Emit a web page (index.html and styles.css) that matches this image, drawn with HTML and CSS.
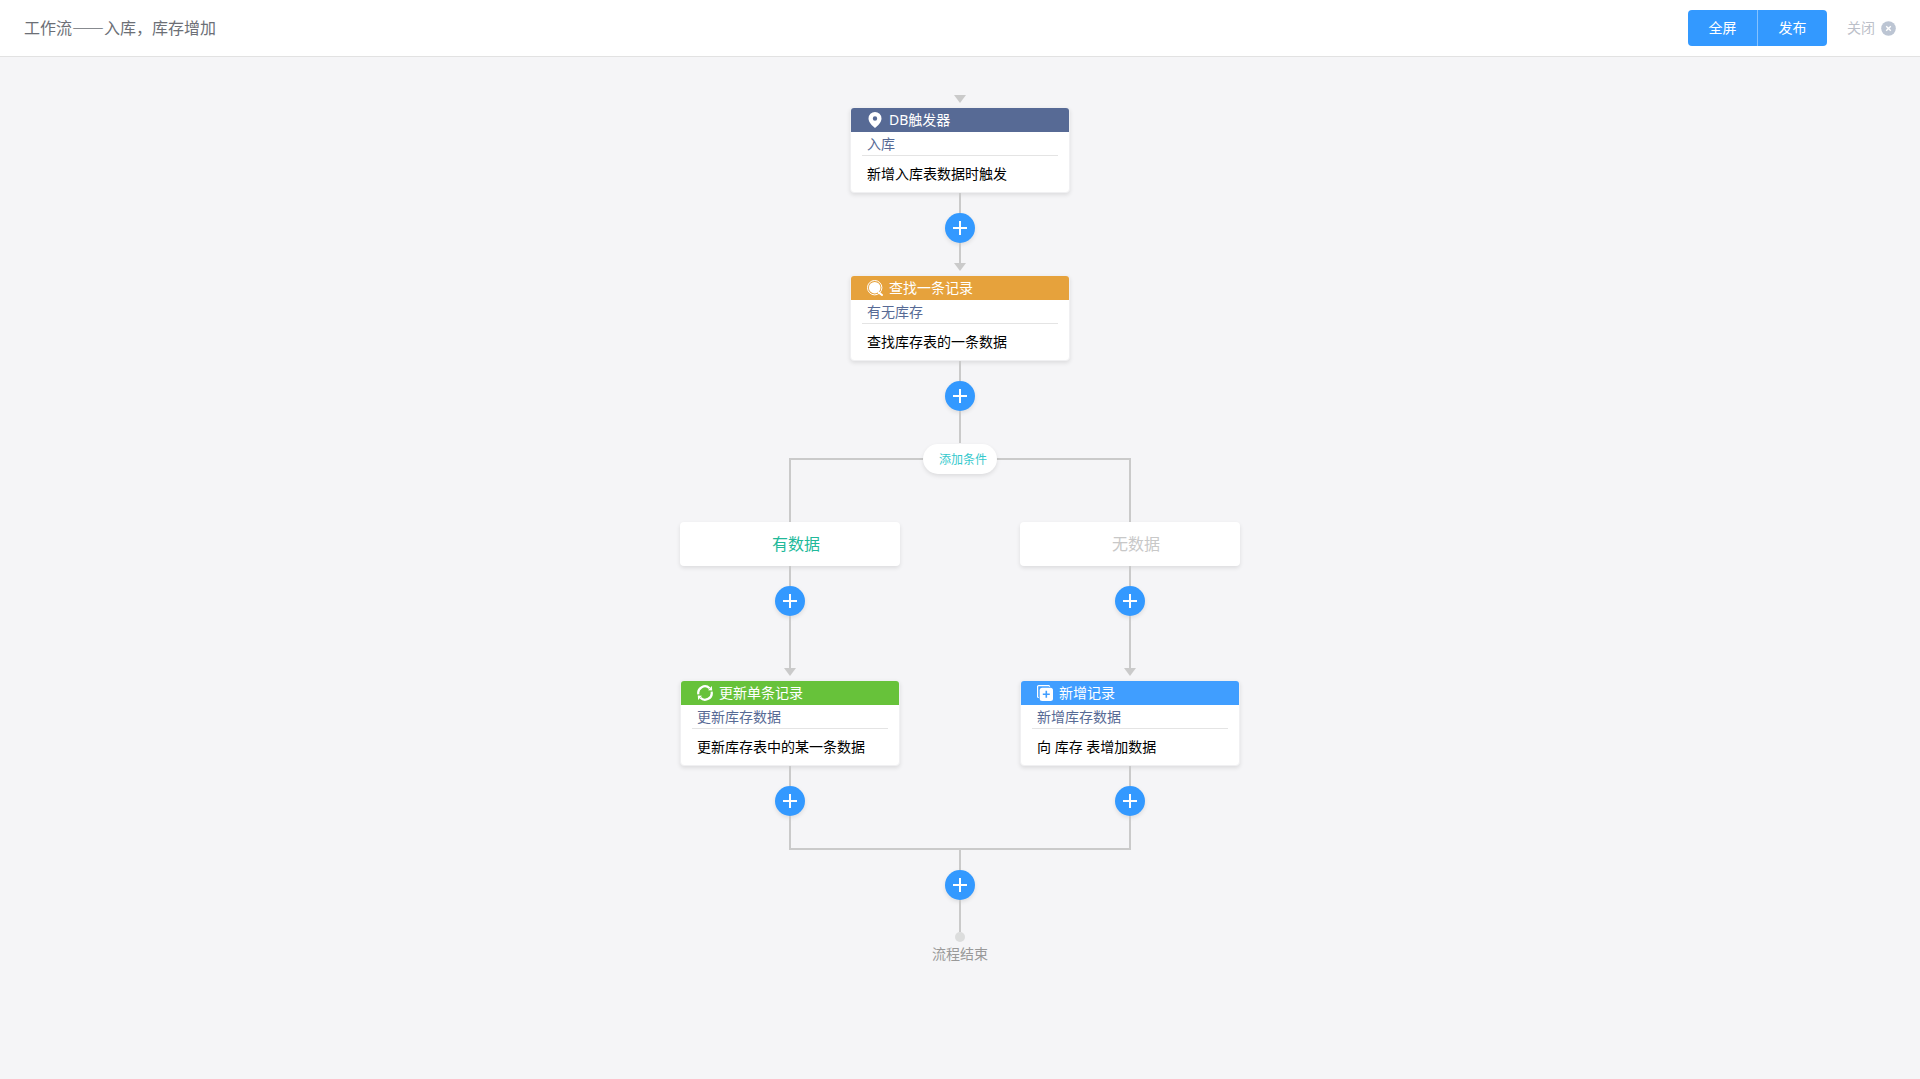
FILE: index.html
```html
<!DOCTYPE html>
<html lang="zh-CN">
<head>
    <meta charset="UTF-8">
    <meta name="viewport" content="width=device-width, initial-scale=1.0">
    <title>工作流——入库，库存增加</title>
    <link rel="stylesheet" href="styles.css">
</head>
<body>
    <header class="topbar">
        <h1>工作流——入库，库存增加</h1>
        <div class="actions">
            <div class="btn-group">
                <button type="button">全屏</button>
                <button type="button">发布</button>
            </div>
            <button type="button" class="close">
                关闭
                <svg width="15" height="15" viewBox="0 0 15 15">
                    <circle cx="7.5" cy="7.5" r="7.3" fill="#bcc5d3"/>
                    <path d="M5.2 5.2l4.6 4.6M9.8 5.2l-4.6 4.6" stroke="#fff" stroke-width="1.4"/>
                </svg>
            </button>
        </div>
    </header>

    <main class="flow">
        <i class="arrow"></i>
        <section class="card trigger">
            <h2>
                <svg width="16" height="16" viewBox="0 0 16 16">
                    <path fill="#fff" fill-rule="evenodd" d="M8 0a6.5 6.5 0 0 0-6.5 6.4C1.5 10 5 13.5 8 16c3-2.5 6.5-6 6.5-9.6A6.5 6.5 0 0 0 8 0zm0 4.3a2.2 2.2 0 1 1 0 4.4 2.2 2.2 0 0 1 0-4.4z"/>
                </svg>
                <span>DB触发器</span>
            </h2>
            <h3>入库</h3>
            <p>新增入库表数据时触发</p>
        </section>
        <i class="line"></i>
        <button type="button" class="add" aria-label="添加节点"></button>
        <i class="line"></i>

        <i class="arrow"></i>
        <section class="card search">
            <h2>
                <svg width="16" height="16" viewBox="0 0 16 16">
                    <circle cx="7.7" cy="7.7" r="7.2" fill="none" stroke="#fff"/>
                    <circle cx="7.7" cy="7.7" r="5.8" fill="#fff"/>
                    <path d="M12 12.6l3 2.4" stroke="#fff" stroke-width="2" stroke-linecap="round"/>
                </svg>
                <span>查找一条记录</span>
            </h2>
            <h3>有无库存</h3>
            <p>查找库存表的一条数据</p>
        </section>
        <i class="line"></i>
        <button type="button" class="add" aria-label="添加节点"></button>
        <i class="line line-mid"></i>

        <button type="button" class="condition">添加条件</button>
        <div class="fork"></div>
        <div class="branches">
            <div class="branch">
                <div class="case has-data">有数据</div>
                <i class="line"></i>
                <button type="button" class="add" aria-label="添加节点"></button>
                <i class="line line-long"></i>
                <i class="arrow"></i>
                <section class="card update">
                    <h2>
                        <svg width="16" height="16" viewBox="0 0 16 16">
                            <path d="M1.4 9.4A6.7 6.7 0 0 1 12.6 3.2M14.6 6.6A6.7 6.7 0 0 1 3.4 12.8" fill="none" stroke="#fff" stroke-width="2.2"/>
                            <path d="M11 5.2L15.2 5.4 14.9 1zM5 10.8L.8 10.6 1.1 15z" fill="#fff"/>
                        </svg>
                        <span>更新单条记录</span>
                    </h2>
                    <h3>更新库存数据</h3>
                    <p>更新库存表中的某一条数据</p>
                </section>
                <i class="line"></i>
                <button type="button" class="add" aria-label="添加节点"></button>
            </div>
            <div class="branch">
                <div class="case">无数据</div>
                <i class="line"></i>
                <button type="button" class="add" aria-label="添加节点"></button>
                <i class="line line-long"></i>
                <i class="arrow"></i>
                <section class="card create">
                    <h2>
                        <svg width="16" height="16" viewBox="0 0 16 16">
                            <path d="M1.8 12.5H1.6a1 1 0 0 1-1-1V1.6a1 1 0 0 1 1-1h10a1 1 0 0 1 1 1v.2" fill="none" stroke="#fff" stroke-width="1.2"/>
                            <rect x="2.7" y="2.7" width="13.3" height="13.3" rx="2.5" fill="#fff"/>
                            <path d="M9.3 5.8v7M5.8 9.3h7" stroke="#409eff" stroke-width="1.6"/>
                        </svg>
                        <span>新增记录</span>
                    </h2>
                    <h3>新增库存数据</h3>
                    <p>向 库存 表增加数据</p>
                </section>
                <i class="line"></i>
                <button type="button" class="add" aria-label="添加节点"></button>
            </div>
        </div>
        <div class="join"></div>

        <i class="line"></i>
        <button type="button" class="add" aria-label="添加节点"></button>
        <i class="line line-mid"></i>
        <i class="dot"></i>
        <p class="end">流程结束</p>
    </main>
</body>
</html>
```

FILE: styles.css
```css
* {
    margin: 0;
    padding: 0;
    box-sizing: border-box;
}

body {
    min-height: 100vh;
    background: #f5f5f7;
    color: #000;
    font-family: 'Noto Sans', 'Noto Sans CJK SC', sans-serif;
    font-size: 14px;
}

button {
    border: none;
    background: none;
    font: inherit;
    cursor: pointer;
}

.topbar {
    display: flex;
    align-items: center;
    justify-content: space-between;
    height: 57px;
    padding: 0 24px;
    background: #fff;
    border-bottom: 1px solid #e2e2e2;
}

.topbar h1 {
    padding-bottom: 2px;
    color: #6c6f76;
    font-family: 'Noto Sans CJK SC', sans-serif;
    font-size: 16px;
    font-weight: 400;
}

.actions {
    display: flex;
    align-items: center;
    gap: 20px;
}

.btn-group {
    display: flex;
    border-radius: 4px;
    overflow: hidden;
}

.btn-group button {
    width: 69px;
    height: 36px;
    padding-bottom: 2px;
    background: #3399ff;
    color: #fff;
}

.btn-group button + button {
    width: 70px;
    border-left: 1px solid #85c2ff;
}

.close {
    display: flex;
    align-items: center;
    gap: 6px;
    color: #bcc0c9;
    line-height: 20px;
}

.flow {
    display: flex;
    flex-direction: column;
    align-items: center;
    padding: 38px 0 40px;
}

/* connectors */
.line {
    width: 2px;
    height: 20px;
    background: #cacaca;
}

.line-mid {
    height: 32px;
}

.line-long {
    height: 52px;
}

.arrow {
    margin-bottom: 4px;
    border: 6px solid transparent;
    border-top: 8px solid #cacaca;
    border-bottom: none;
}

.fork, .join {
    width: 342px;
    border: 2px solid #cacaca;
}

.fork {
    height: 64px;
    margin-top: -16px;
    border-bottom: none;
}

.join {
    height: 34px;
    border-top: none;
}

.dot {
    width: 10px;
    height: 10px;
    border-radius: 50%;
    background: #dcdddd;
}

/* round plus button */
.add {
    width: 30px;
    height: 30px;
    border-radius: 50%;
    background:
        linear-gradient(#fff, #fff) center / 14px 2px no-repeat,
        linear-gradient(#fff, #fff) center / 2px 14px no-repeat,
        #3399ff;
    box-shadow: 0 2px 4px rgba(0,0,0,.1);
}

/* node cards */
.card {
    width: 220px;
    height: 86px;
    border: 1px solid #f0f0f2;
    border-radius: 4px;
    background: #fff;
    box-shadow: 0 2px 4px rgba(0,0,0,.1);
    overflow: hidden;
}

.card h2 {
    display: flex;
    align-items: center;
    gap: 6px;
    height: 24px;
    padding-left: 16px;
    color: #fff;
    font-size: 14px;
    font-weight: 400;
}

.card h2 span {
    padding-bottom: 2px;
}

.card h3 {
    height: 24px;
    margin: 0 11px;
    padding-left: 5px;
    border-bottom: 1px solid #e4e4e4;
    color: #576a95;
    font-size: 14px;
    font-weight: 400;
    line-height: 24px;
}

.card p {
    padding-left: 16px;
    line-height: 36px;
}

.trigger h2 { background: #576a95 }
.search h2 { background: #e6a23c }
.update h2 { background: #67c23a }
.create h2 { background: #409eff }

.condition {
    position: relative;
    height: 30px;
    margin-top: 1px;
    padding: 0 10px 0 16px;
    border-radius: 15px;
    background: #fff;
    color: #34c9cd;
    font-size: 12px;
    box-shadow: 0 2px 4px rgba(0,0,0,.1);
}

.branches {
    display: grid;
    grid-template-columns: 340px 340px;
}

.branch {
    display: flex;
    flex-direction: column;
    align-items: center;
}

.case {
    width: 220px;
    height: 44px;
    padding-left: 12px;
    border-radius: 4px;
    background: #fff;
    color: #c8c8c8;
    font-size: 16px;
    line-height: 44px;
    text-align: center;
    box-shadow: 0 2px 4px rgba(0,0,0,.1);
}

.has-data {
    color: #21b99a;
}

.end {
    color: #999;
    line-height: 24px;
}
```
